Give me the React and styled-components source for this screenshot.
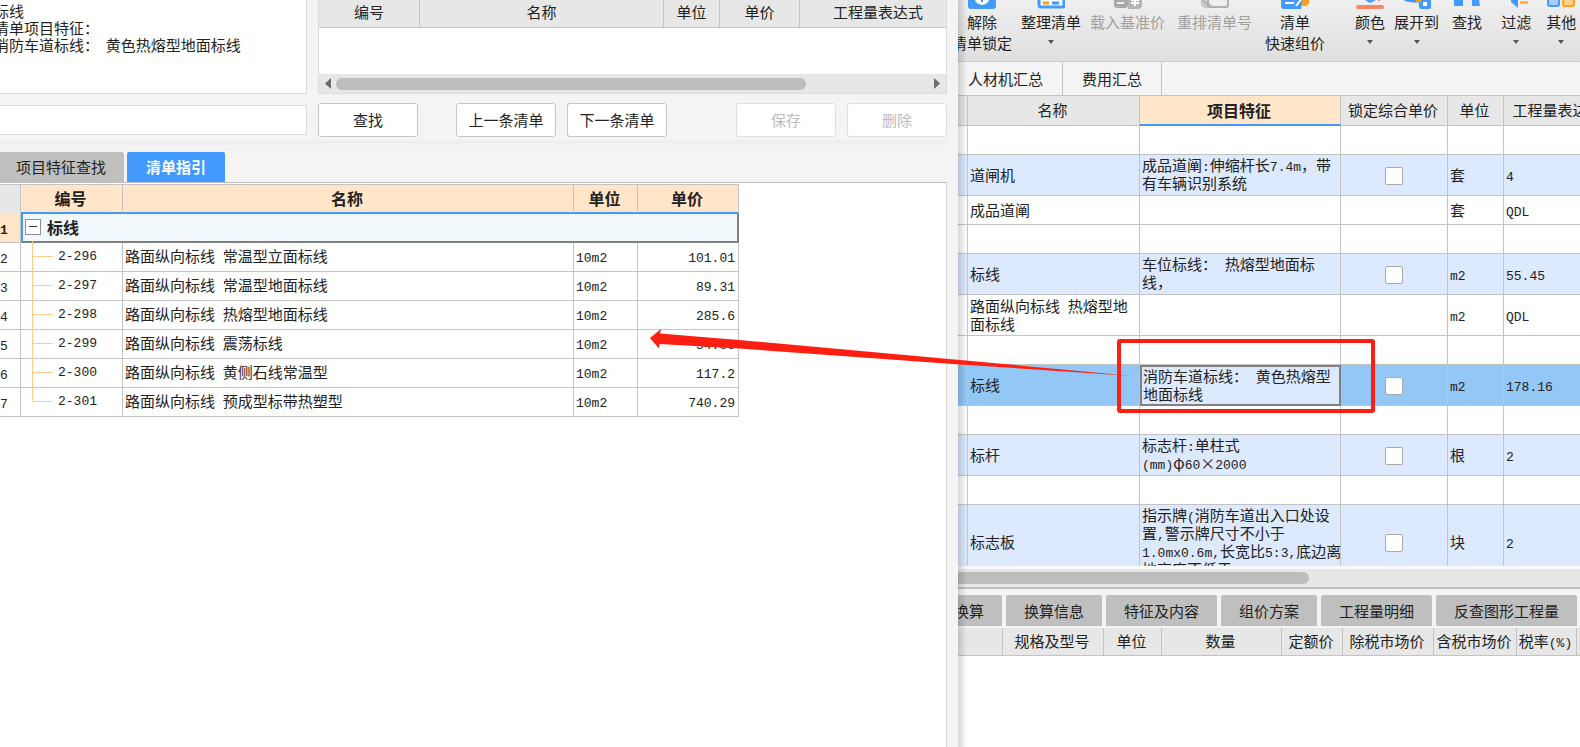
import React from "react";
import styled, { createGlobalStyle, css } from "styled-components";

const line = "#c3c3c3";
const blue = "#4499ff";
const orange = "#ff9f1a";
const peach = "#ffe6c8";

const GlobalStyle = createGlobalStyle`
  * {
    box-sizing: border-box;
  }
  body {
    margin: 0;
    overflow: hidden;
    font-family: "Noto Sans CJK SC", "Liberation Sans", sans-serif;
    font-size: 15px;
    line-height: 18px;
    color: #222;
  }
  button, input, textarea {
    font: inherit;
    color: inherit;
  }
`;

const Screen = styled.div`
  position: relative;
  display: grid;
  grid-template-columns: 958fr 622fr;
  height: 100vh;
  overflow: hidden;
`;

const Latin = styled.span`
  font-family: "Liberation Mono", monospace;
  font-size: 13px;
  line-height: 0;
`;

/* ---------- left dialog ---------- */

const Dialog = styled.section`
  display: flex;
  flex-direction: column;
  min-width: 0;
  margin-left: -12px;
  padding-right: 11px;
  background: #f4f4f4;
`;

const Upper = styled.div`
  display: grid;
  grid-template-columns: 319px 1fr;
  column-gap: 11px;
  row-gap: 9px;
  height: 140px;
  grid-template-rows: 94px 34px;
  align-items: center;
  align-content: start;
`;

const Description = styled.textarea`
  width: 100%;
  height: 94px;
  padding: 2px 5px;
  border: 1px solid #dcdcdc;
  border-top: none;
  border-radius: 0;
  background: #fff;
  line-height: 17px;
  resize: none;
  outline: none;
`;

const Keyword = styled.input`
  width: 100%;
  height: 30px;
  border: 1px solid #dcdcdc;
  background: #fff;
  outline: none;
`;

const MiniGrid = styled.div`
  display: flex;
  flex-direction: column;
  height: 94px;
  border: 1px solid #dcdcdc;
  border-top: none;
  background: #fff;
`;

const MiniTable = styled.table`
  width: 100%;
  table-layout: fixed;
  border-spacing: 0;
  th {
    height: 28px;
    padding: 0 0 4px;
    font-weight: 400;
    background: #e7e7e7;
    border-bottom: 1px solid ${line};
    border-right: 1px solid ${line};
  }
  th:last-child {
    padding-left: 10px;
    border-right: none;
  }
`;

const ScrollBar = styled.div`
  display: flex;
  align-items: center;
  gap: 5px;
  height: 19px;
  margin-top: auto;
  padding: 0 6px;
  background: #e7e7e7;
`;

const Track = styled.div`
  flex: 1;
  padding-right: 20%;
`;

const Thumb = styled.div`
  height: 12px;
  border-radius: 6px;
  background: #bdbdbd;
`;

const Buttons = styled.div`
  display: flex;
  gap: 11px;
`;

const Spacer = styled.div`
  flex: ${props => props.$grow};
`;

const Button = styled.button`
  width: 100px;
  height: 34px;
  padding: 0;
  border: 1px solid #c6c6c6;
  border-radius: 3px;
  background: #fff;
  &:disabled {
    color: #bdbdbd;
    border-color: #dedede;
  }
`;

const Splitter = styled.div`
  height: 5px;
  background: #efefef;
`;

const GuideTabs = styled.div`
  display: flex;
  gap: 3px;
  height: 38px;
  padding-top: 7px;
  border-bottom: 1px solid #bdbdbd;
`;

const GuideTab = styled.button`
  padding: 0 19px;
  border: none;
  border-radius: 2px 2px 0 0;
  background: #bfbfbf;
  ${props =>
    props.$wide &&
    css`
      padding-left: 28px;
      padding-right: 18px;
    `}
  ${props =>
    props.$active &&
    css`
      background: ${blue};
      color: #fff;
      font-weight: 700;
    `}
`;

const GuideBody = styled.div`
  flex: 1;
  padding-top: 1px;
  background: #fff;
  border-right: 1px solid #d9d9d9;
`;

const GuideTable = styled.table`
  width: 751px;
  table-layout: fixed;
  border-spacing: 0;
  th,
  td {
    height: 29px;
    padding: 0 3px 3px 2px;
    border-right: 1px solid ${line};
    border-bottom: 1px solid ${line};
    white-space: nowrap;
  }
  thead th {
    height: 30px;
    padding: 0 2px 2px 0;
    font-size: 16px;
    background: ${peach};
    border-top: 1px solid ${line};
    border-bottom: 2px solid ${blue};
  }
  thead th:first-child {
    background: #e7e7e7;
    border-bottom-color: #e7e7e7;
  }
`;

const RowNumber = styled.th.attrs({ scope: "row" })`
  && {
    padding: 0;
    text-align: center;
    font-weight: ${props => (props.$current ? 700 : 400)};
    background: ${props => (props.$current ? peach : "#fff")};
  }
`;

const GroupCell = styled.td`
  && {
    padding: 0 0 2px 2px;
    background: #f0f8fc;
    border-left: 2px solid ${blue};
    border-right: 2px solid #808080;
    border-bottom: 2px solid #808080;
    font-size: 16px;
    font-weight: 700;
  }
`;

const Flex = styled.div`
  display: flex;
  align-items: center;
  gap: ${props => props.$gap || 0}px;
`;

const Toggle = styled.button`
  display: flex;
  width: 16px;
  height: 16px;
  padding: 0;
  align-items: center;
  justify-content: center;
  border: 1px solid #8f8f8f;
  background: #fff;
  &::before {
    content: "";
    width: 8px;
    height: 1px;
    background: #333;
  }
`;

const TreeCell = styled.td`
  && {
    padding: 0;
  }
`;

const BranchSvg = styled.svg`
  display: block;
  overflow: visible;
`;

const Price = styled.td`
  text-align: right;
`;

/* ---------- right window ---------- */

const MainWindow = styled.section`
  position: relative;
  display: flex;
  flex-direction: column;
  min-width: 0;
  overflow: hidden;
  background: #fff;
  &::before {
    content: "";
    position: absolute;
    z-index: 1;
    top: 0;
    bottom: 0;
    left: 0;
    width: 9px;
    background: linear-gradient(to right, rgba(0, 0, 0, 0.16), rgba(0, 0, 0, 0));
  }
`;

const Toolbar = styled.div`
  display: flex;
  align-items: flex-start;
  flex: none;
  margin-left: -6px;
  height: 62px;
  border-bottom: 1px solid #cbcbcb;
  background: linear-gradient(#efefef, #dfdfdf);
`;

const Tool = styled.button`
  display: flex;
  flex: none;
  flex-direction: column;
  align-items: center;
  margin: -18px 0 0 ${props => props.$before}px;
  padding: 0;
  border: none;
  background: none;
  line-height: 21px;
  white-space: nowrap;
  svg {
    margin-bottom: 2px;
  }
  &:disabled {
    color: #a0a0a0;
  }
`;

const Caret = styled.span`
  margin-top: 8px;
  border: 3px solid transparent;
  border-top: 4px solid #555;
  border-bottom: none;
`;

const PageTabs = styled.div`
  display: flex;
  flex: none;
  height: 34px;
  background: #f4f4f4;
  border-bottom: 1px solid ${line};
`;

const PageTab = styled.button`
  padding: 0 19px 0 ${props => props.$left}px;
  border: none;
  border-right: 1px solid ${line};
  background: none;
`;

const ItemsClip = styled.div`
  flex: none;
  height: 470px;
  overflow: hidden;
`;

const ItemsTable = styled.table`
  width: calc(100% + 34px);
  table-layout: fixed;
  border-spacing: 0;
  th {
    height: 30px;
    padding: 0 2px 1px 0;
    background: #e7e7e7;
    font-weight: 400;
    border-right: 1px solid ${line};
    border-bottom: 1px solid ${line};
    white-space: nowrap;
  }
  th:nth-child(3) {
    background: ${peach};
    font-size: 16px;
    font-weight: 700;
    border-bottom: 2px solid ${blue};
  }
  td {
    padding: 0 0 1px 2px;
    border-right: 1px solid ${line};
    border-bottom: 1px solid ${line};
    white-space: pre;
  }
`;

const ItemRow = styled.tr`
  height: ${props => props.$height}px;
  background: ${props => props.$tone};
`;

const FeatureCell = styled.td`
  && {
    padding-top: 1px;
    vertical-align: top;
  }
  ${props =>
    props.$selected &&
    css`
      && {
        padding: 0 0 0 1px;
        background: #dde9fe;
        border: 2px solid #808080;
      }
    `}
`;

const CheckCell = styled.td`
  && {
    padding: 0;
    text-align: center;
  }
`;

const Check = styled.input.attrs({ type: "checkbox" })`
  appearance: none;
  display: block;
  width: 18px;
  height: 18px;
  margin: 1px auto 0;
  border: 1px solid #a9a9a9;
  border-radius: 2px;
  background: #fff;
`;

const BottomScroll = styled.div`
  flex: none;
  height: 23px;
  padding: 3px 271px 0 0;
  border-top: 3px solid #fafafa;
  border-bottom: 2px solid #bfbfbf;
  background: #e7e7e7;
`;

const BottomThumb = styled(Thumb)`
  border-radius: 0 6px 6px 0;
`;

const DetailTabs = styled.div`
  display: flex;
  flex: none;
  gap: 4px;
  height: 39px;
  padding: 6px 0 2px;
  margin-left: -52px;
  background: #f4f4f4;
`;

const DetailTab = styled.button`
  flex: none;
  padding: 0 18px;
  border: none;
  border-radius: 2px 2px 0 0;
  background: #bfbfbf;
`;

const DetailTable = styled.table`
  width: calc(100% + 34px);
  table-layout: fixed;
  border-spacing: 0;
  th {
    height: 28px;
    padding: 0 2px 1px 0;
    background: #e7e7e7;
    font-weight: 400;
    border-right: 1px solid ${line};
    border-bottom: 1px solid ${line};
    white-space: nowrap;
    overflow: hidden;
  }
`;

const Annotation = styled.svg`
  position: absolute;
  z-index: 2;
  top: 0;
  left: 0;
  pointer-events: none;
`;

// Latin runs are set in half-width characters next to the full-width Chinese ones
const Mixed = ({ text }) =>
  text
    .split(/([ -~]+)/)
    .map((part, i) => (i % 2 ? <Latin key={i}>{part}</Latin> : part));

const Branch = ({ last }) => (
  <BranchSvg width="37" height="28">
    <path
      d={last ? "M11.5 -2V13.5H32" : "M11.5 -2V29M11.5 13.5H32"}
      fill="none"
      stroke="#ffcd8a"
    />
  </BranchSvg>
);

const ArrowIcon = ({ right }) => (
  <svg width="6" height="11">
    <path d={right ? "M0 0L6 5.5L0 11Z" : "M6 0L0 5.5L6 11Z"} fill="#6b6b70" />
  </svg>
);

const icons = {
  unlock: (
    <>
      <rect x="0" y="4" width="28" height="23" rx="3" fill={blue} />
      <path d="M7 10H21V18Q20 22 14 23Q8 22 7 18Z" fill="#fff" />
      <path d="M14 14V20" stroke={blue} strokeWidth="2" />
    </>
  ),
  arrange: (
    <>
      <rect x="2" y="4" width="25" height="21" rx="2" fill="#f6faff" stroke={blue} strokeWidth="3" />
      <path d="M6 21H12" stroke={orange} strokeWidth="3" />
      <path d="M15 21H22" stroke={blue} strokeWidth="3" />
    </>
  ),
  load: (
    <>
      <rect x="0" y="10" width="14" height="16" rx="3" fill="#aaa" />
      <path d="M3 21H10" stroke="#eee" strokeWidth="2" />
      <path d="M14 6H28V24Q27 27 24 27H14Z" fill="#b4b4b4" />
      <path d="M21 16V24M17 18H25M17 21H25" stroke="#fff" strokeWidth="2" />
    </>
  ),
  reorder: (
    <>
      <path d="M0 17L13 26H5Q1 26 0 22Z" fill="#c9c9c9" />
      <rect x="7" y="8" width="20" height="17" rx="2" fill="#eee" stroke="#b0b0b0" strokeWidth="2" />
      <path d="M2 18L10 24" fill="none" stroke="#b0b0b0" strokeWidth="2" />
    </>
  ),
  price: (
    <>
      <path d="M21 8H28V21Q27 24 24 24H21Z" fill={orange} />
      <path d="M0 5H24L20 27H3Q0 27 0 24Z" fill={blue} />
      <path d="M4 21H13M15 24L22 15" stroke="#fff" strokeWidth="2" />
    </>
  ),
  colour: (
    <>
      <path d="M9 14L14 8L20 14V18L14 21L9 18Z" fill={blue} />
      <circle cx="23" cy="17" r="2" fill="#fa8663" />
      <path d="M2 25H26" stroke="#fa8663" strokeWidth="4" strokeLinecap="round" />
    </>
  ),
  expand: (
    <>
      <path d="M0 16H10V20H5L0 18Z" fill={blue} />
      <path d="M8 19H17" stroke={blue} strokeWidth="3" />
      <rect x="16" y="14" width="12" height="13" rx="2" fill={blue} />
      <path d="M13 18.5H18" stroke={orange} strokeWidth="3" />
      <rect x="20" y="20" width="4" height="4" fill="#fff" />
    </>
  ),
  find: <path d="M4 4H10V10H18V4H24L27 24H19V18H10V24H1V18Z" fill={blue} />,
  filter: (
    <>
      <path d="M1 4H24L16 17V26L9 20V17Z" fill={blue} />
      <path d="M18 20.5H26" stroke={orange} strokeWidth="2" />
    </>
  ),
  other: (
    <>
      <rect x="1" y="12" width="11" height="12" rx="2" fill="#a5d0ff" stroke={blue} strokeWidth="2" />
      <rect x="16" y="12" width="11" height="12" rx="2" fill="#ffd08a" stroke={orange} strokeWidth="2" />
    </>
  )
};

const tools = [
  { icon: "unlock", label: "解除", second: "清单锁定", before: 0 },
  { icon: "arrange", label: "整理清单", caret: true, before: 9 },
  { icon: "load", label: "载入基准价", disabled: true, before: 9 },
  { icon: "reorder", label: "重排清单号", disabled: true, before: 12 },
  { icon: "price", label: "清单", second: "快速组价", before: 13 },
  { icon: "colour", label: "颜色", caret: true, before: 30 },
  { icon: "expand", label: "展开到", caret: true, before: 9 },
  { icon: "find", label: "查找", before: 13 },
  { icon: "filter", label: "过滤", caret: true, before: 19 },
  { icon: "other", label: "其他", caret: true, before: 15 }
];

const guide = [
  ["2-296", "路面纵向标线 常温型立面标线", "101.01"],
  ["2-297", "路面纵向标线 常温型地面标线", "89.31"],
  ["2-298", "路面纵向标线 热熔型地面标线", "285.6"],
  ["2-299", "路面纵向标线 震荡标线", "54.88"],
  ["2-300", "路面纵向标线 黄侧石线常温型", "117.2"],
  ["2-301", "路面纵向标线 预成型标带热塑型", "740.29"]
];

const pale = "#dde9fe";
const empty = { height: 29, tone: "#fff" };

const items = [
  empty,
  { height: 41, tone: pale, name: "道闸机", feature: "成品道阐:伸缩杆长7.4m，带\n有车辆识别系统", unit: "套", amount: "4", check: true },
  { height: 29, tone: "#fff", name: "成品道阐", unit: "套", amount: "QDL" },
  empty,
  { height: 41, tone: pale, name: "标线", feature: "车位标线： 热熔型地面标\n线，", unit: "m2", amount: "55.45", check: true },
  { height: 41, tone: "#fff", name: "路面纵向标线 热熔型地\n面标线", unit: "m2", amount: "QDL" },
  empty,
  { height: 41, tone: "#92c7f6", name: "标线", feature: "消防车道标线： 黄色热熔型\n地面标线", unit: "m2", amount: "178.16", check: true, selected: true },
  empty,
  { height: 41, tone: pale, name: "标杆", feature: "标志杆:单柱式\n(mm)φ60×2000", unit: "根", amount: "2", check: true },
  empty,
  { height: 68, tone: pale, name: "标志板", feature: "指示牌(消防车道出入口处设\n置,警示牌尺寸不小于\n1.0mx0.6m,长宽比5:3,底边离\n地高度不低于2.2 )", unit: "块", amount: "2", check: true }
];

const detailTabs = ["标准换算", "换算信息", "特征及内容", "组价方案", "工程量明细", "反查图形工程量"];

const LeftDialog = () => (
  <Dialog>
    <Upper>
      <Description
        readOnly
        aria-label="清单项目特征"
        defaultValue={"标线\n清单项目特征：\n消防车道标线：  黄色热熔型地面标线"}
      />
      <MiniGrid>
        <MiniTable>
          <colgroup>
            <col style={{ width: 101 }} />
            <col />
            <col style={{ width: 56 }} />
            <col style={{ width: 80 }} />
            <col style={{ width: 146 }} />
          </colgroup>
          <thead>
            <tr>
              <th>编号</th>
              <th>名称</th>
              <th>单位</th>
              <th>单价</th>
              <th>工程量表达式</th>
            </tr>
          </thead>
        </MiniTable>
        <ScrollBar>
          <ArrowIcon />
          <Track>
            <Thumb />
          </Track>
          <ArrowIcon right />
        </ScrollBar>
      </MiniGrid>
      <Keyword type="text" aria-label="关键字" />
      <Buttons>
        <Button>查找</Button>
        <Spacer $grow={16} />
        <Button>上一条清单</Button>
        <Button>下一条清单</Button>
        <Spacer $grow={47} />
        <Button disabled>保存</Button>
        <Button disabled>删除</Button>
      </Buttons>
    </Upper>
    <Splitter />
    <GuideTabs>
      <GuideTab $wide>项目特征查找</GuideTab>
      <GuideTab $active>清单指引</GuideTab>
    </GuideTabs>
    <GuideBody>
      <GuideTable>
        <colgroup>
          <col style={{ width: 33 }} />
          <col style={{ width: 102 }} />
          <col />
          <col style={{ width: 64 }} />
          <col style={{ width: 101 }} />
        </colgroup>
        <thead>
          <tr>
            <th />
            <th>编号</th>
            <th>名称</th>
            <th>单位</th>
            <th>单价</th>
          </tr>
        </thead>
        <tbody>
          <tr>
            <RowNumber $current>
              <Latin>1</Latin>
            </RowNumber>
            <GroupCell colSpan={4}>
              <Flex $gap={6}>
                <Toggle aria-label="折叠" />
                标线
              </Flex>
            </GroupCell>
          </tr>
          {guide.map(([code, name, price], i) => (
            <tr key={code}>
              <RowNumber>
                <Latin>{i + 2}</Latin>
              </RowNumber>
              <TreeCell>
                <Flex>
                  <Branch last={i === guide.length - 1} />
                  <Latin>{code}</Latin>
                </Flex>
              </TreeCell>
              <td>
                <Mixed text={name} />
              </td>
              <td>
                <Latin>10m2</Latin>
              </td>
              <Price>
                <Latin>{price}</Latin>
              </Price>
            </tr>
          ))}
        </tbody>
      </GuideTable>
    </GuideBody>
  </Dialog>
);

const RightWindow = () => (
  <MainWindow>
    <Toolbar>
      {tools.map(tool => (
        <Tool key={tool.icon} disabled={tool.disabled} $before={tool.before}>
          <svg width="28" height="27">
            {icons[tool.icon]}
          </svg>
          <span>{tool.label}</span>
          {tool.second && <span>{tool.second}</span>}
          {tool.caret && <Caret />}
        </Tool>
      ))}
    </Toolbar>
    <PageTabs>
      <PageTab $left={10}>人材机汇总</PageTab>
      <PageTab $left={19}>费用汇总</PageTab>
    </PageTabs>
    <ItemsClip>
      <ItemsTable>
        <colgroup>
          <col style={{ width: 10 }} />
          <col style={{ width: 172 }} />
          <col />
          <col style={{ width: 107 }} />
          <col style={{ width: 56 }} />
          <col style={{ width: 110 }} />
        </colgroup>
        <thead>
          <tr>
            <th />
            <th>名称</th>
            <th>项目特征</th>
            <th>锁定综合单价</th>
            <th>单位</th>
            <th>工程量表达式</th>
          </tr>
        </thead>
        <tbody>
          {items.map((item, i) => (
            <ItemRow key={i} $height={item.height} $tone={item.tone}>
              <td />
              <td>{item.name && <Mixed text={item.name} />}</td>
              <FeatureCell $selected={item.selected}>
                {item.feature && <Mixed text={item.feature} />}
              </FeatureCell>
              <CheckCell>
                {item.check && <Check aria-label={`锁定综合单价 ${item.name}`} />}
              </CheckCell>
              <td>{item.unit && <Mixed text={item.unit} />}</td>
              <td>{item.amount && <Mixed text={item.amount} />}</td>
            </ItemRow>
          ))}
        </tbody>
      </ItemsTable>
    </ItemsClip>
    <BottomScroll>
      <BottomThumb />
    </BottomScroll>
    <DetailTabs>
      {detailTabs.map(tab => (
        <DetailTab key={tab}>{tab}</DetailTab>
      ))}
    </DetailTabs>
    <DetailTable>
      <colgroup>
        <col style={{ width: 45 }} />
        <col style={{ width: 101 }} />
        <col style={{ width: 58 }} />
        <col />
        <col style={{ width: 61 }} />
        <col style={{ width: 91 }} />
        <col style={{ width: 83 }} />
        <col style={{ width: 60 }} />
        <col style={{ width: 37 }} />
      </colgroup>
      <thead>
        <tr>
          <th />
          <th>规格及型号</th>
          <th>单位</th>
          <th>数量</th>
          <th>定额价</th>
          <th>除税市场价</th>
          <th>含税市场价</th>
          <th>
            <Mixed text="税率(%)" />
          </th>
          <th>实际</th>
        </tr>
      </thead>
    </DetailTable>
  </MainWindow>
);

const App = () => (
  <Screen>
    <GlobalStyle />
    <LeftDialog />
    <RightWindow />
    <Annotation width="1400" height="430" viewBox="0 0 1400 430">
      <rect x="1119" y="341" width="254" height="70" rx="1" fill="none" stroke="#ff1f12" strokeWidth="4" />
      <path
        d="M650 338L661 329L660 333.5L739 340L960 360L1133 376L960 364.5L739 348.5L659.5 344L659 348.5Z"
        fill="#ff1f12"
      />
    </Annotation>
  </Screen>
);

export default App;
